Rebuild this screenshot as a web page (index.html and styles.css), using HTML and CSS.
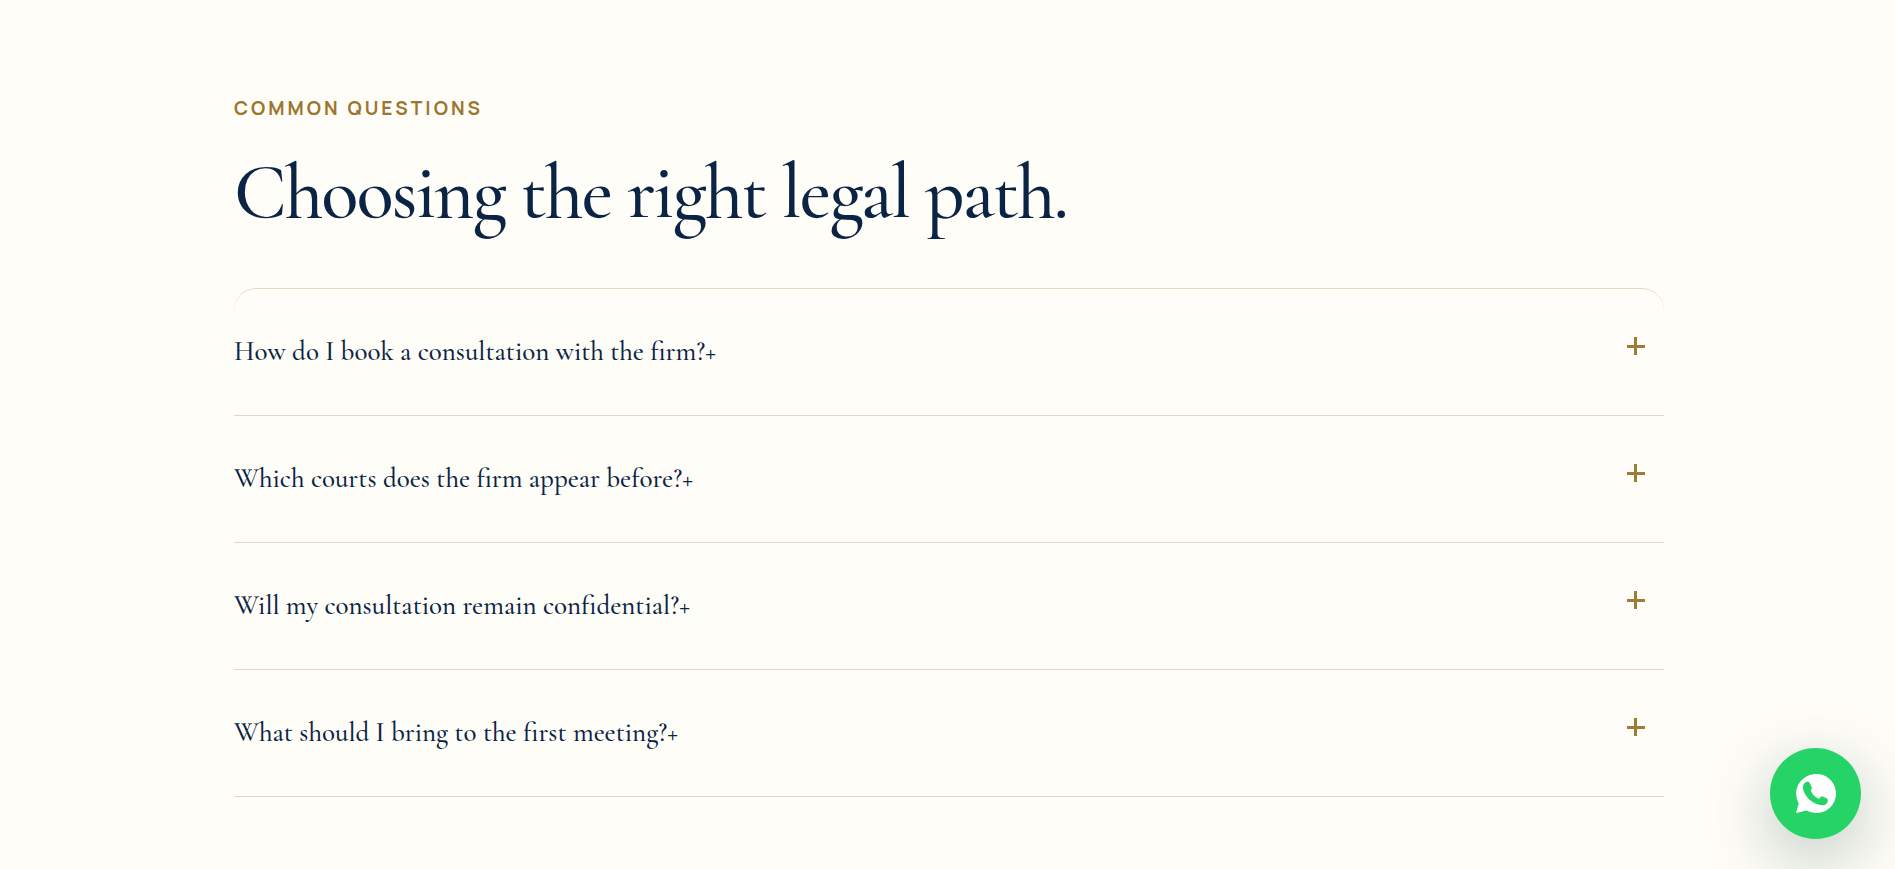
FILE: index.html
```html
<!DOCTYPE html>
<html lang="en">
<head>
    <meta charset="UTF-8">
    <meta name="viewport" content="width=device-width, initial-scale=1.0">
    <title>Common Questions</title>
    <link rel="stylesheet" href="styles.css">
</head>
<body>
    <section class="faq">
        <div class="container">
            <p class="eyebrow">Common Questions</p>
            <h2>Choosing the right legal path.</h2>

            <div class="faq-list">
                <details>
                    <summary>How do I book a consultation with the firm?<span>+</span></summary>
                </details>
                <details>
                    <summary>Which courts does the firm appear before?<span>+</span></summary>
                </details>
                <details>
                    <summary>Will my consultation remain confidential?<span>+</span></summary>
                </details>
                <details>
                    <summary>What should I bring to the first meeting?<span>+</span></summary>
                </details>
            </div>
        </div>
    </section>

    <a class="whatsapp" href="#" aria-label="WhatsApp">
        <svg viewBox="0 0 40 40" aria-hidden="true">
            <path fill="#fff" d="M20.500 0C31.300 0 40 8.600 40 19.500S31.300 39 20.500 39C17 39 13.500 38 10.500 36.500L0 39L2.800 29.200C1 26.300 .2 23 .2 19.500C.2 8.600 9.500 0 20.500 0Z"/>
            <path fill="#25d366" d="M9.500 8.200C11 7.400 13.200 7.600 13.900 9.200L15.700 13.600C16.200 15.200 14.800 15.800 14.900 17C16.200 20.200 19 23.200 22.400 24.700C23.600 25.200 24.400 22 26 22.200L31 24.400C32.500 25.200 31.900 28.200 30.500 29.700C28 32 23.500 31.300 19.800 29.700C14 27.200 9.400 22.300 7.500 16.800C6.300 13.300 7 9.800 9.500 8.200Z"/>
        </svg>
    </a>
</body>
</html>
```

FILE: styles.css
```css
* {
    box-sizing: border-box;
}
body {
    margin: 0;
    background: #fffdf8;
    color: #0b2445;
    font-family: 'Manrope', 'Inter', sans-serif;
}
.faq {
    padding: 96px 20px 72px 23px;
}
.container {
    max-width: 1430px;
    margin: 0 auto;
}
.eyebrow {
    margin: 0 0 25px;
    color: #9c762e;
    font-size: 19px;
    font-weight: 700;
    line-height: 24px;
    letter-spacing: 3px;
    text-transform: uppercase;
}
h2 {
    margin: 0 0 47px;
    font-family: 'Cormorant Garamond', 'Liberation Serif', serif;
    font-size: 77px;
    font-weight: 500;
    line-height: 96px;
    letter-spacing: -2px;
}
.faq-list {
    border-top: 1px solid #e3d9c3;
    border-radius: 22px 22px 0 0;
}
details {
    border-bottom: 1px solid #ded8c6;
}
summary {
    display: flex;
    position: relative;
    padding: 44px 64px 44px 0;
    font-family: 'Cormorant Garamond', 'Liberation Serif', serif;
    font-size: 27px;
    font-weight: 500;
    line-height: 38px;
    list-style: none;
    cursor: pointer;
}
summary::-webkit-details-marker {
    display: none;
}
/* gold toggle on the right */
summary::before,
summary::after {
    content: "";
    position: absolute;
    top: 56px;
    right: 19px;
    width: 18px;
    height: 3px;
    background: #a17c38;
}
summary::after {
    top: 48px;
    right: 27px;
    width: 3px;
    height: 18px;
}
details[open] summary::after {
    display: none;
}
.whatsapp {
    display: grid;
    place-items: center;
    position: fixed;
    right: 34px;
    bottom: 30px;
    width: 91px;
    height: 91px;
    border-radius: 50%;
    background: #25d366;
    box-shadow: 0 20px 68px rgba(11, 60, 50, 0.28);
}
.whatsapp svg {
    width: 40px;
    height: 40px;
}
```
